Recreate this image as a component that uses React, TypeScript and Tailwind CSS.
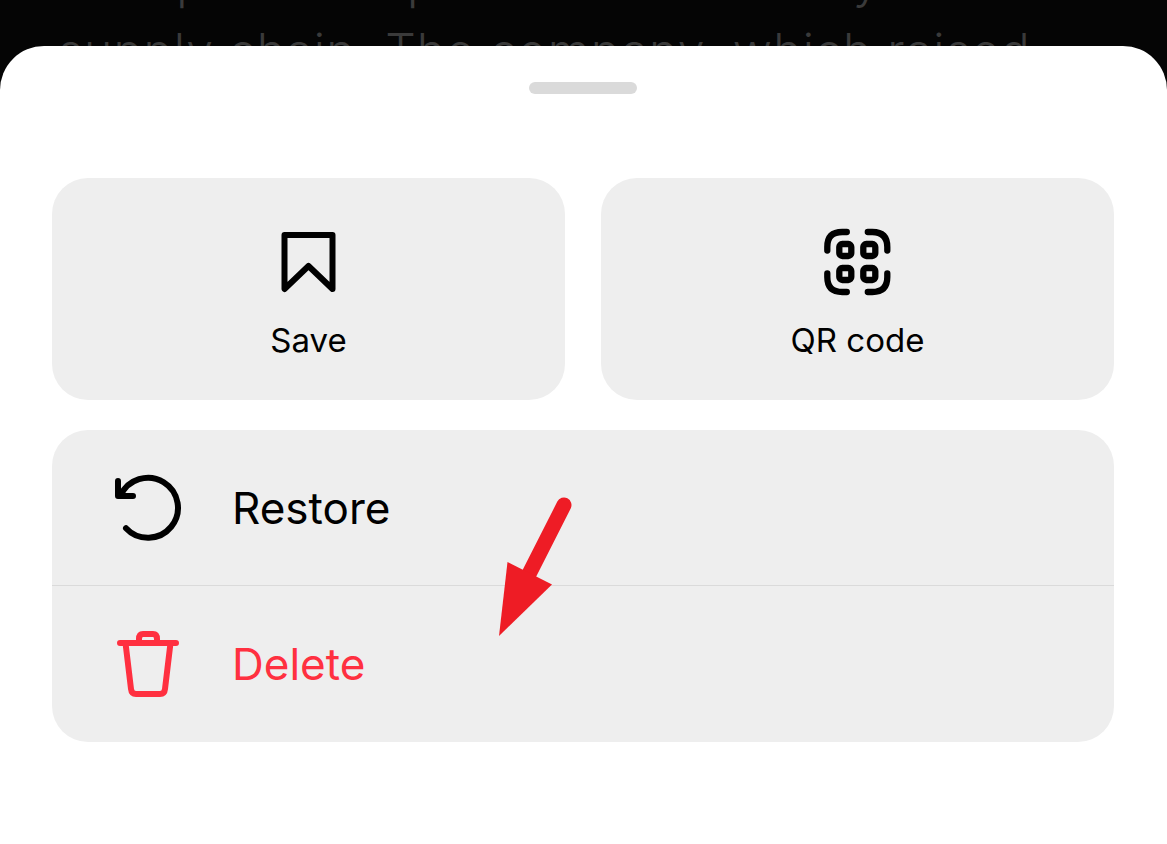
import React from "react";

const font = "font-['Inter','Liberation_Sans',sans-serif]";

function BookmarkIcon() {
  return (
    <svg className="size-[72px]" viewBox="0 0 72 72" fill="none" stroke="currentColor" strokeWidth="6" strokeLinecap="round" strokeLinejoin="round" aria-hidden="true">
      <path d="M11.500 9H59.500V63L35.500 40L11.500 63Z" />
    </svg>
  );
}

function QrIcon() {
  return (
    <svg className="size-[72px]" viewBox="0.700 0 72 72" fill="none" stroke="currentColor" strokeWidth="6.300" strokeLinecap="round" strokeLinejoin="round" aria-hidden="true">
      <path d="M6 24.500V21Q6 6 21 6H25.500M46.500 6H51Q66 6 66 21V24.500M66 47.500V51Q66 66 51 66H46.500M25.500 66H21Q6 66 6 51V47.500" />
      <rect x="18" y="18" width="12" height="12" rx="3" />
      <rect x="42" y="18" width="12" height="12" rx="3" />
      <rect x="18" y="42" width="12" height="12" rx="3" />
      <rect x="42" y="42" width="12" height="12" rx="3" />
    </svg>
  );
}

function RestoreIcon() {
  return (
    <svg className="size-[72px]" viewBox="0 0 72 72" fill="none" stroke="currentColor" strokeWidth="6" strokeLinecap="round" strokeLinejoin="round" aria-hidden="true">
      <path d="M6 9V24H21M8.500 23.700A30 30 0 1 1 14 56.200" />
    </svg>
  );
}

function TrashIcon() {
  return (
    <svg className="size-[72px]" viewBox="0 0 72 72" fill="none" stroke="currentColor" strokeWidth="6" strokeLinecap="round" strokeLinejoin="round" aria-hidden="true">
      <path d="M8 15H64M27 15V11Q27 6 31 6H41Q45 6 45 11V15M13.500 15L19 61Q19.500 66 24 66H48Q52.500 66 53 61L58.500 15" />
    </svg>
  );
}

export default function App() {
  return (
    <main className={`relative flex min-h-screen flex-col overflow-hidden bg-[#050505] text-black ${font}`}>
      <div className="h-[46px] shrink-0 overflow-visible">
        <p className="-mt-[54px] whitespace-nowrap px-[58px] text-[48px] font-light leading-[70px] tracking-wide text-[#3a3a3a]">
          the open tools platform for delivery
          <br />
          supply chain. The company, which raised
        </p>
      </div>
      <section aria-label="Actions" className="relative flex grow flex-col rounded-t-[44px] bg-white pb-[102px] pl-[52px] pr-[53px] pt-9">
        <div className="h-3 w-[108px] self-center rounded-full bg-[#dadada]" />
        <div className="mt-[84px] grid grid-cols-2 gap-9">
          <button type="button" className="flex h-[222px] flex-col items-center rounded-[36px] bg-[#eeeeee] pt-12">
            <BookmarkIcon />
            <span className="mt-[22px] text-[33px] leading-10">Save</span>
          </button>
          <button type="button" className="flex h-[222px] flex-col items-center rounded-[36px] bg-[#eeeeee] pt-12">
            <QrIcon />
            <span className="mt-[22px] text-[33px] leading-10">QR code</span>
          </button>
        </div>
        <div className="relative mt-[30px] overflow-hidden rounded-[36px] bg-[#eeeeee]">
          <button type="button" className="flex h-[156px] w-full items-center gap-12 border-b border-[#dadada] px-[60px] text-[44px]">
            <RestoreIcon />
            <span>Restore</span>
          </button>
          <button type="button" className="flex h-[156px] w-full items-center gap-12 px-[60px] text-[44px] text-[#ff3040]">
            <TrashIcon />
            <span>Delete</span>
          </button>
          <svg className="pointer-events-none absolute left-[447px] top-[66px] h-[142px] w-[76px]" viewBox="0 0 76 142" fill="#ee1c25" aria-hidden="true">
            <path d="M65 9L28 82" stroke="#ee1c25" strokeWidth="15" strokeLinecap="round" />
            <path d="M8.500 66L53 88.500L0 140Z" />
          </svg>
        </div>
      </section>
    </main>
  );
}
